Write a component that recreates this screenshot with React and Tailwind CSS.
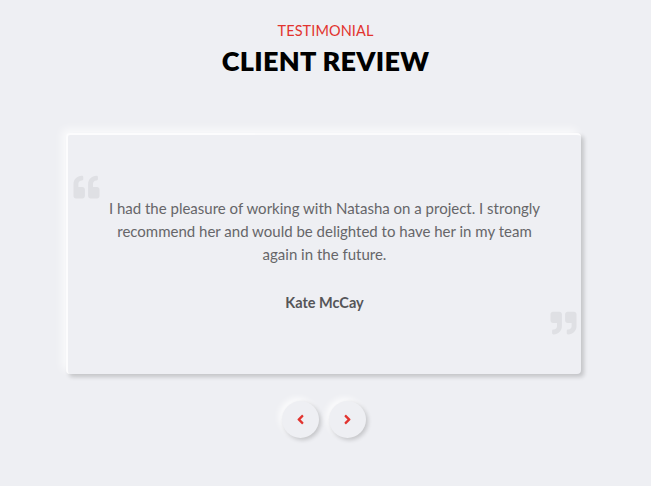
import React from "react";
import { FaQuoteLeft, FaQuoteRight, FaAngleLeft, FaAngleRight } from "react-icons/fa";

export default function App() {
  return (
    <div className="w-[651px] h-[486px] bg-[#eeeff3] flex flex-col items-center" style={{ fontFamily: "Lato, 'Open Sans', sans-serif" }}>
      <div className="pt-[22px] text-[14.5px] leading-[18px] text-[#e2342f] tracking-[0.1px]">TESTIMONIAL</div>
      <div className="mt-[5px] text-[27px] leading-[32px] font-extrabold text-black tracking-[0.3px]">CLIENT REVIEW</div>
      <div className="mt-[56px] self-start ml-[66px] w-[515px] h-[241px] rounded-[4px] bg-[#eeeff3] border-l-2 border-t-2 border-white/80 shadow-[3px_3px_4px_rgba(0,0,0,0.18),-4px_-4px_8px_rgba(255,255,255,0.7)] flex flex-col">
        <div className="flex">
          <FaQuoteLeft className="ml-[4px] mt-[39px] w-[29px] h-[26px] text-[#dfe0e4]" />
        </div>
        <p className="mt-[-3px] px-[38px] text-center text-[15px] leading-[23px] text-[#666669]">
          I had the pleasure of working with Natasha on a project. I strongly recommend her and would be delighted to have her in my team again in the future.
        </p>
        <div className="mt-[26px] text-center text-[14.5px] font-bold text-[#555558]">Kate McCay</div>
        <div className="flex justify-end">
          <FaQuoteRight className="mr-[3px] mt-[-4px] w-[29px] h-[26px] text-[#dfe0e4]" />
        </div>
      </div>
      <div className="mt-[27px] ml-[-4px] flex gap-[10px]">
        <button className="w-[37px] h-[37px] rounded-full bg-[#eeeff3] shadow-[2px_2px_4px_rgba(0,0,0,0.18),-3px_-3px_6px_rgba(255,255,255,0.8)] flex items-center justify-center">
          <FaAngleLeft className="w-[15px] h-[15px] text-[#e2342f]" />
        </button>
        <button className="w-[37px] h-[37px] rounded-full bg-[#eeeff3] shadow-[2px_2px_4px_rgba(0,0,0,0.18),-3px_-3px_6px_rgba(255,255,255,0.8)] flex items-center justify-center">
          <FaAngleRight className="w-[15px] h-[15px] text-[#e2342f]" />
        </button>
      </div>
    </div>
  );
}
